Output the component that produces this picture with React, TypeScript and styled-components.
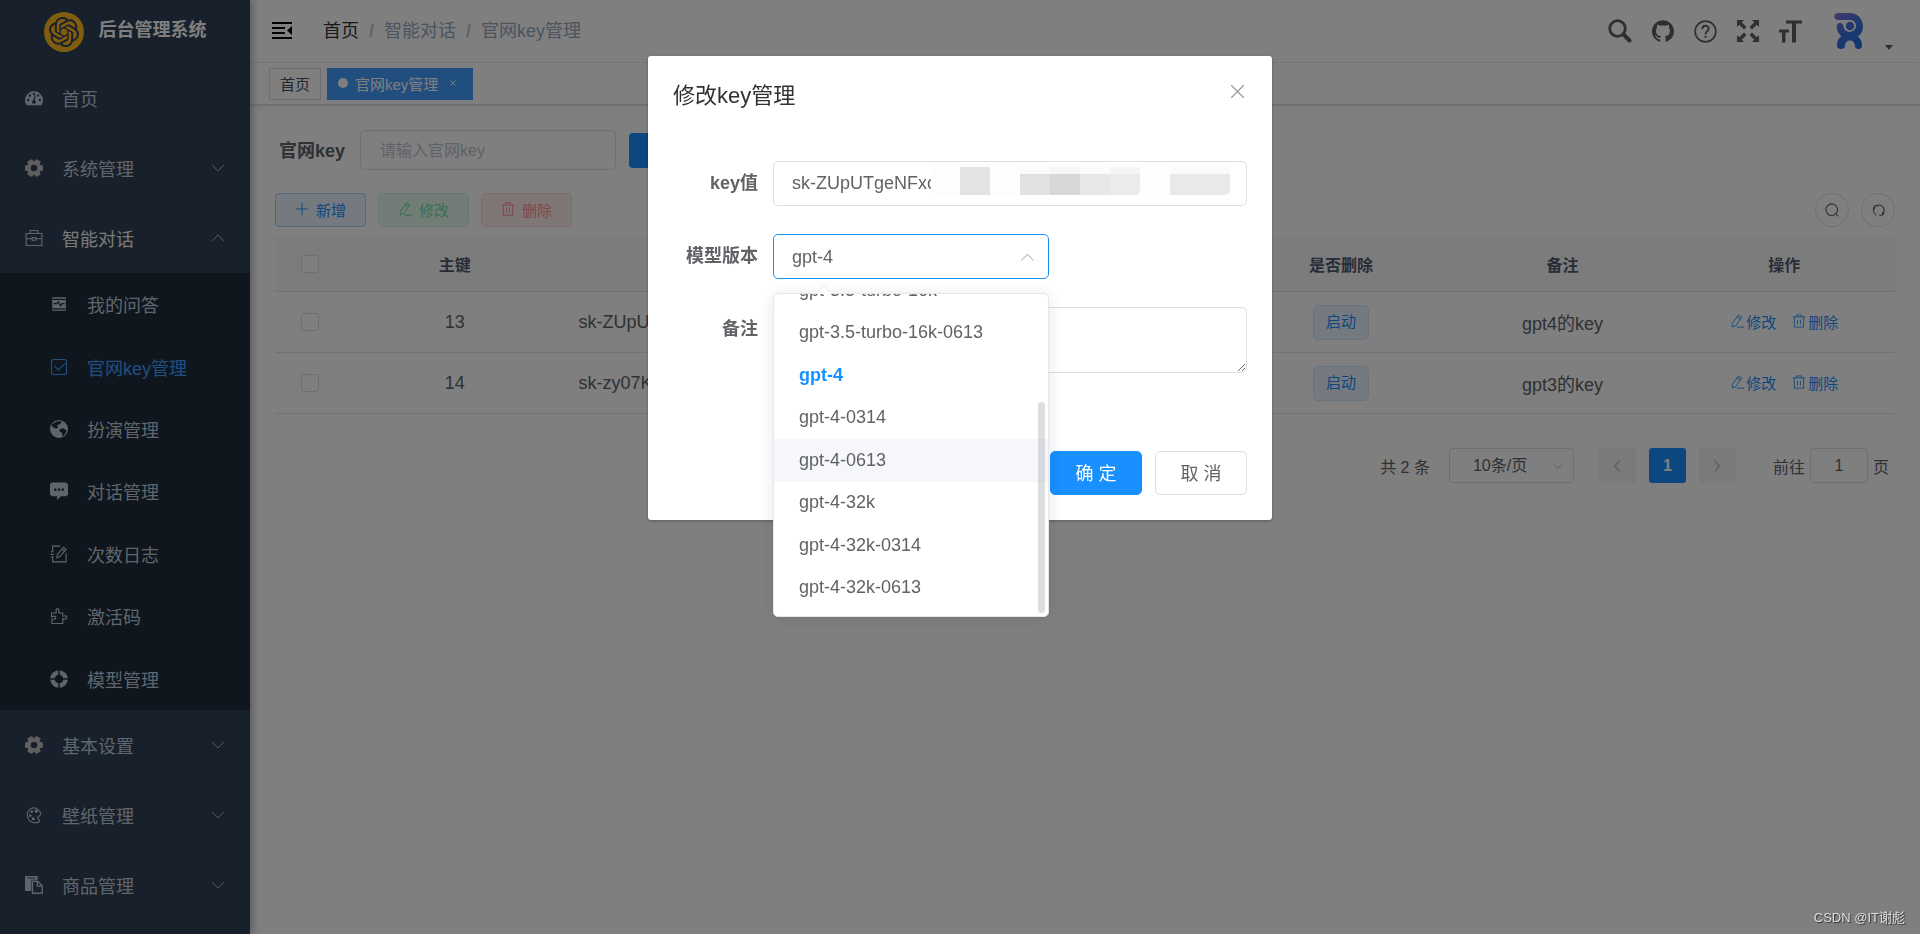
import React from 'react';
import styled, { createGlobalStyle, css } from 'styled-components';
import { SiOpenai, SiGithub } from 'react-icons/si';

const Global = createGlobalStyle`
  *, *::before, *::after { box-sizing: border-box; }
  html, body { margin: 0; background: #fff; }
  body, button, input, select, textarea {
    font-family: "Liberation Sans", "Noto Sans CJK SC", sans-serif;
    font-size: 18px;
    color: #606266;
  }
  a { text-decoration: none; color: inherit; }
  ul { list-style: none; margin: 0; padding: 0; }
  button { cursor: pointer; }
`;

/* ---------- icons ---------- */

const Svg = styled.svg<{ $size: number }>`
  width: ${p => p.$size}px;
  height: ${p => p.$size}px;
  flex: none;
  display: block;
`;

type IconProps = { size?: number };
type LineProps = IconProps & { d: string; weight?: number };

const Line = ({ d, size = 18, weight = 1.5 }: LineProps) => (
  <Svg $size={size} viewBox="0 0 24 24" fill="none" stroke="currentColor" strokeWidth={weight} aria-hidden="true">
    <path d={d} />
  </Svg>
);

const paths = {
  down: 'M2 7 L12 17 L22 7',
  up: 'M2 17 L12 7 L22 17',
  left: 'M16 3 L8 12 L16 21',
  right: 'M8 3 L16 12 L8 21',
  close: 'M2 2 L22 22 M22 2 L2 22',
  plus: 'M12 1 V23 M1 12 H23',
  edit: 'M14 2 L20 5 L10 20 L4 22 L4 16 Z M12 5.500 L18 8.500 M12 22.500 H24',
  trash: 'M1 5 H23 M4 5 V22.500 H20 V5 M8 5 V1.500 H16 V5 M9.500 10 V18 M14.500 10 V18',
  search: 'M17.500 19.500 A10 10 0 1 1 19.500 17.500 M17 17 L22.500 23',
  refresh: 'M5.500 4.500 H11 M5.500 4.500 V10 M5.500 5.500 C3 9 2.500 15.500 8.500 19.500 M9 4 C15 1.500 22 6 21 13 M18.500 19.500 H13 M18.500 19.500 V14 M18 19.500 C20 17.500 21 15 21 13',
  briefcase: 'M1.500 6 H22.500 V22 H1.500 Z M7 6 V2 H17 V6 M1.500 13 H9.500 M14.500 13 H22.500 M9.500 11.500 H14.500 V15 H9.500 Z',
  checkbox: 'M4 2 H20 L22 4 V20 L20 22 H4 L2 20 V4 Z M6 10.500 L11 16 L20 7.500',
  log: 'M3.500 8 V1.500 H14 M3.500 17 V22.500 H21.500 V11 M1 9 H5 M1 12.500 H5 M1 16 H5 M9 17 L10 12.500 L18 3 L21.500 6 L13 15.500 Z M16 5.500 L19 8.500',
  puzzle: 'M2 8 H8 C9 6 7 5 8.500 3 C10 1.500 12 2.500 12 4.500 L11.500 8 H17 V12 C19 13 20 11 22 12 C23.500 14 22 16.500 20 16 L17 15.500 V22 H2.500 V16.500 C4 15.500 6 17.500 7.500 15.500 C8.500 13 6 11.500 4.500 12.500 L2 13 Z',
};

const Dashboard = () => (
  <Svg $size={18} viewBox="0 0 24 24" fill="currentColor" aria-hidden="true">
    <path fillRule="evenodd" d="M12 3 A12 12 0 0 0 2 21.500 H22 A12 12 0 0 0 12 3 Z M12 5 a1.600 1.600 0 1 1 0 3.200 a1.600 1.600 0 0 1 0 -3.200 Z M6.500 7 a1.600 1.600 0 1 1 0 3.200 a1.600 1.600 0 0 1 0 -3.200 Z M17.500 7 a1.600 1.600 0 1 1 0 3.200 a1.600 1.600 0 0 1 0 -3.200 Z M4.200 13 a1.600 1.600 0 1 1 0 3.200 a1.600 1.600 0 0 1 0 -3.200 Z M19.800 13 a1.600 1.600 0 1 1 0 3.200 a1.600 1.600 0 0 1 0 -3.200 Z M14 8.500 L13.300 15.200 A2.500 2.500 0 1 1 11 15 L12.800 8.300 Z" />
  </Svg>
);

const Gear = () => (
  <Svg $size={18} viewBox="0 0 24 24" aria-hidden="true">
    <g fill="#bebebe">
      {[0, 60, 120].map(a => (
        <rect key={a} x="8" y="0" width="8" height="24" rx="2" transform={`rotate(${a + 30} 12 12)`} />
      ))}
      <circle cx="12" cy="12" r="9" />
    </g>
    <circle cx="12" cy="12" r="4.400" fill="#304156" />
  </Svg>
);

const Monitor = () => (
  <Svg $size={18} viewBox="0 0 24 24" aria-hidden="true">
    <path d="M3 3 H21 V21 H3 Z" fill="currentColor" />
    <path d="M3.500 5.800 H20.500 M3.500 18.500 H20.500 M5 11.500 H9 L11 9 L14 14.500 L16 11.500 H19.500" fill="none" stroke="#1f2d3d" strokeWidth="1.400" />
  </Svg>
);

const Globe = () => (
  <Svg $size={18} viewBox="0 0 24 24" aria-hidden="true">
    <circle cx="12" cy="12" r="12" fill="currentColor" />
    <path d="M9 2 L16 1.500 L14 5 L9.500 7 L11 10 L8 11.500 L3 9 L2 6 Z M13 12 L18 11 L22 14 L20 19 L16.500 22 L16 17 L12.500 15 Z" fill="#1f2d3d" />
  </Svg>
);

const Chat = () => (
  <Svg $size={18} viewBox="0 0 24 24" aria-hidden="true">
    <path d="M2.500 0.500 H21.500 L24 3 V16.500 L21.500 19 H14.500 L9.500 24 V19 H2.500 L0 16.500 V3 Z" fill="currentColor" />
    <path d="M5.500 8.500 h3 v3 h-3 Z M10.500 8.500 h3 v3 h-3 Z M15.500 8.500 h3 v3 h-3 Z" fill="#1f2d3d" />
  </Svg>
);

const Ring = () => (
  <Svg $size={18} viewBox="0 0 24 24" aria-hidden="true">
    <circle cx="12" cy="12" r="8.800" fill="none" stroke="currentColor" strokeWidth="6" />
    <path d="M12 0 V6.500 M12 17.500 V24 M0 12 H6.500 M17.500 12 H24" stroke="#1f2d3d" strokeWidth="2" />
  </Svg>
);

const Palette = () => (
  <Svg $size={18} viewBox="0 0 24 24" fill="none" stroke="currentColor" strokeWidth="1.500" aria-hidden="true">
    <path d="M20.500 8.500 C18 3 11 0.500 6.500 4.500 C2 8.500 2 15.500 6 19.500 C9 22.500 14 22.800 18.500 21.500 C21 19.500 17 18 17 15.500 C17.500 12.500 22.500 14 20.500 8.500 Z" />
    <g fill="currentColor" stroke="none">
      <circle cx="9" cy="7.500" r="1.800" /><circle cx="15" cy="7" r="2.200" /><circle cx="7" cy="13" r="1.800" /><circle cx="11" cy="17" r="2" />
    </g>
  </Svg>
);

const Pages = () => (
  <Svg $size={18} viewBox="0 0 24 24" aria-hidden="true">
    <path d="M0 0 H17 V5 H8.500 V20 H0 Z" fill="currentColor" />
    <path d="M3.500 2.600 H13.500" stroke="#304156" strokeWidth="1.200" />
    <path d="M10 7 H17 L23 13 V23 H10 Z M16.500 7 V13.500 H23" fill="none" stroke="currentColor" strokeWidth="1.800" />
  </Svg>
);

const Hamburger = () => (
  <Svg $size={21} viewBox="0 0 21 21" fill="#000" aria-hidden="true">
    <path d="M0 1 H20 V3 H0 Z M0 6 H13 V8 H0 Z M0 11 H13 V13 H0 Z M0 16 H20 V18 H0 Z M20 5 V14 L15 9.500 Z" />
  </Svg>
);

const HeaderSearch = () => (
  <Svg $size={24} viewBox="0 0 24 24" fill="none" stroke="currentColor" aria-hidden="true">
    <circle cx="9.500" cy="9.500" r="7.800" strokeWidth="2.800" />
    <path d="M15.500 15.500 L21.500 21.500" strokeWidth="4" strokeLinecap="round" />
  </Svg>
);

const Question = () => (
  <Svg $size={23} viewBox="0 0 24 24" fill="none" stroke="currentColor" strokeWidth="1.700" aria-hidden="true">
    <circle cx="12" cy="12" r="10.800" />
    <path d="M8.700 9.500 C8.700 4.800 15.300 5 15.300 9.200 C15.300 12 12 11.500 12 14.800 M12 16.500 V18.500" strokeWidth="2" />
  </Svg>
);

const Expand = () => (
  <Svg $size={22} viewBox="0 0 22 22" fill="currentColor" aria-hidden="true">
    {[0, 90, 180, 270].map(a => (
      <path key={a} transform={`rotate(${a} 11 11)`} d="M0 0 H7 L4.800 2.200 L9.500 7 L7 9.500 L2.200 4.800 L0 7 Z" />
    ))}
  </Svg>
);

const FontSize = () => (
  <Svg $size={23} viewBox="0 0 23 23" fill="currentColor" aria-hidden="true">
    <path d="M7 0.500 H23 V3.500 H17 V22.500 H13 V3.500 H7 Z M0 9.500 H10 V12.500 H6.500 V22.500 H3 V12.500 H0 Z" />
  </Svg>
);

const Avatar = () => (
  <Svg $size={38} viewBox="0 0 38 38" aria-hidden="true">
    <defs>
      <linearGradient id="brand" x1="0" y1="0" x2="0.600" y2="1">
        <stop offset="0" stopColor="#8a78d8" />
        <stop offset="0.450" stopColor="#4a72e0" />
        <stop offset="1" stopColor="#1f6fe0" />
      </linearGradient>
    </defs>
    <path fill="url(#brand)" d="M8 1 H19 C28 1 33 7 33 15 C33 19 31 22 28 24.500 C31 27 32 30 32 34 C32 38 25 38 25 34 C25 26.500 15 26.500 15 34 C15 38 7 38 7 34 C7 29 8 26.500 11.500 24.500 C8 21 6 17 7 13 C8 10 12 10 13 13 L14 16 C16 22 26 20 26 14 C26 10 23.500 8 20 8 H8 C3 8 3 1 8 1 Z" />
    <circle cx="20" cy="14" r="5" fill="#4a72e0" stroke="#fff" strokeWidth="1.500" />
  </Svg>
);

/* ---------- shell ---------- */

const Shell = styled.div`
  display: flex;
  min-height: 100vh;
`;

const Sidebar = styled.nav`
  width: 250px;
  flex: none;
  background: #304156;
  color: #bfcbd9;
  box-shadow: 2px 0 8px rgba(0, 21, 41, 0.35);
  z-index: 1;
`;

const Brand = styled.a`
  height: 63px;
  display: flex;
  align-items: center;
  justify-content: center;
  gap: 15px;
  color: #fff;
  font-weight: 700;
  line-height: 24px;
  white-space: nowrap;
`;

const BrandText = styled.span`
  padding-bottom: 4px;
`;

const BrandMark = styled.span`
  width: 40px;
  height: 40px;
  border-radius: 50%;
  background: #ffb91d;
  color: #304156;
  display: grid;
  place-items: center;
`;

const MenuLink = styled.a<{ $open?: boolean }>`
  height: 70px;
  padding: 0 25px;
  display: flex;
  align-items: center;
  gap: 19px;
  color: ${p => (p.$open ? '#f4f4f5' : '#bfcbd9')};
  > svg { color: #bfcbd9; }
`;

const MenuText = styled.span`
  flex: 1;
`;

const SubMenu = styled.ul`
  height: 437px;
  display: flex;
  flex-direction: column;
  background: #1f2d3d;
  li { flex: 1; display: flex; }
`;

const SubLink = styled.a<{ $active?: boolean }>`
  flex: 1;
  padding-left: 50px;
  display: flex;
  align-items: center;
  gap: 19px;
  color: ${p => (p.$active ? '#409eff' : '#bfcbd9')};
`;

const Column = styled.div`
  flex: 1;
  min-width: 0;
`;

const TopBar = styled.header`
  height: 63px;
  padding: 0 25px 0 22px;
  display: flex;
  align-items: center;
  border-bottom: 1px solid #f0f1f4;
`;

const Bare = styled.button`
  border: 0;
  background: none;
  padding: 0;
  display: flex;
  align-items: center;
  color: inherit;
`;

const Crumbs = styled.ol`
  flex: 1;
  list-style: none;
  margin: 0 0 0 30px;
  padding: 0 0 4px;
  display: flex;
  color: #97a8be;
  li:first-child a { color: #303133; }
  li + li::before {
    content: '/';
    margin: 0 10px;
    color: #c0c4cc;
    font-weight: 700;
  }
`;

const Tools = styled.div`
  display: flex;
  align-items: center;
  gap: 20px;
  color: #5a5e66;
`;

const User = styled(Bare)`
  margin: 0 2px 0 8px;
  gap: 17px;
  align-items: flex-end;
`;

const Caret = styled.span`
  border: 4px solid transparent;
  border-top: 5px solid #5a5e66;
  border-bottom: 0;
`;

const Tabs = styled.div`
  height: 42px;
  padding: 5px 19px;
  display: flex;
  align-items: flex-start;
  gap: 6px;
  border-bottom: 1px solid #d8dce5;
  box-shadow: 0 1px 3px rgba(0, 0, 0, 0.12);
`;

const Tab = styled.a<{ $active?: boolean }>`
  height: 32px;
  padding: 0 10px 2px;
  display: flex;
  align-items: center;
  font-size: 15px;
  border: 1px solid #d8dce5;
  color: #495060;
  ${p => p.$active && css`
    background: #409eff;
    border-color: #409eff;
    color: #fff;
    padding-right: 16px;
    &::before {
      content: '';
      width: 10px;
      height: 10px;
      margin-right: 7px;
      border-radius: 50%;
      background: #fff;
    }
  `}
`;

const TabClose = styled(Bare)`
  margin-left: 12px;
`;

/* ---------- content ---------- */

const Content = styled.main`
  padding: 25px;
`;

const SearchForm = styled.form`
  display: flex;
  align-items: center;
  margin-bottom: 23px;
`;

const SearchLabel = styled.label`
  width: 85px;
  padding: 0 15px 2px 0;
  display: flex;
  justify-content: flex-end;
  font-weight: 700;
  white-space: nowrap;
`;

const SearchInput = styled.input`
  width: 256px;
  height: 40px;
  margin-right: 13px;
  padding: 2px 19px 0;
  font-size: 16px;
  border: 1px solid #dcdfe6;
  border-radius: 5px;
  background: #fff;
  &::placeholder { color: #c0c4cc; }
`;

const Solid = styled.button`
  width: 91px;
  height: 35px;
  padding: 0 30px;
  border: 0;
  border-radius: 4px;
  background: #1890ff;
  color: #fff;
`;

const ActionRow = styled.div`
  display: flex;
  gap: 12px;
  margin-bottom: 10px;
`;

const tones = {
  primary: ['#e8f4ff', '#a3d3ff', '#1890ff'],
  success: ['#e7faf0', '#d0f5e0', '#71e2a3'],
  danger: ['#ffeded', '#ffdbdb', '#ff9292'],
};

const PlainButton = styled.button<{ $tone: keyof typeof tones }>`
  width: 91px;
  height: 34px;
  padding: 0 0 2px;
  display: flex;
  align-items: center;
  justify-content: center;
  gap: 7px;
  font-size: 15px;
  border-radius: 4px;
  background: ${p => tones[p.$tone][0]};
  border: 1px solid ${p => tones[p.$tone][1]};
  color: ${p => tones[p.$tone][2]};
`;

const Spacer = styled.div`
  flex: 1;
`;

const RoundButton = styled.button`
  width: 34px;
  height: 34px;
  padding: 0;
  display: grid;
  place-items: center;
  border: 1px solid #dcdfe6;
  border-radius: 50%;
  background: #fff;
`;

const Table = styled.table`
  width: 100%;
  table-layout: fixed;
  border-collapse: separate;
  border-spacing: 0;
  text-align: center;
  th, td {
    padding: 0 13px;
    border-bottom: 1px solid #dfe6ec;
    white-space: nowrap;
  }
  th {
    height: 55px;
    background: #f8f8f9;
    color: #515a6e;
    font-size: 16px;
    font-weight: 700;
  }
  td { height: 61px; overflow: hidden; text-overflow: ellipsis; }
  th:first-child { width: 69px; }
`;

const KeyText = styled.span`
  display: block;
  text-align: left;
`;

const Check = styled.input`
  appearance: none;
  display: block;
  width: 18px;
  height: 18px;
  margin: 0 auto;
  border: 1px solid #dcdfe6;
  border-radius: 3px;
  background: #fff;
`;

const StatusTag = styled.span`
  display: inline-block;
  height: 35px;
  padding: 0 12px;
  line-height: 31px;
  font-size: 15px;
  border: 1px solid #d1e9ff;
  border-radius: 5px;
  background: #e8f4ff;
  color: #1890ff;
  vertical-align: middle;
`;

const RowActions = styled.div`
  display: flex;
  justify-content: center;
  gap: 16px;
  padding-bottom: 2px;
`;

const RowAction = styled(Bare)`
  gap: 2px;
  font-size: 15px;
  color: #1890ff;
`;

const Pagination = styled.div`
  display: flex;
  align-items: center;
  justify-content: flex-end;
  margin: 34px 6px 0 0;
  font-size: 16px;
`;

const SizeBox = styled.div`
  position: relative;
  margin: 0 25px 0 19px;
  > svg { position: absolute; right: 10px; top: 12px; color: #c0c4cc; }
`;

const SizeSelect = styled.select`
  appearance: none;
  display: block;
  width: 125px;
  height: 35px;
  padding: 0 23px;
  font-size: 16px;
  border: 1px solid #dcdfe6;
  border-radius: 4px;
  background: #fff;
`;

const PageButton = styled.button<{ $current?: boolean }>`
  width: 37px;
  height: 35px;
  margin-right: 13px;
  padding: 0;
  display: grid;
  place-items: center;
  border: 0;
  border-radius: 3px;
  font-size: 16px;
  font-weight: 700;
  background: ${p => (p.$current ? '#1890ff' : '#f4f4f5')};
  color: ${p => (p.$current ? '#fff' : '#c0c4cc')};
`;

const Jump = styled.label`
  display: flex;
  align-items: center;
  gap: 5px;
  margin-left: 24px;
`;

const JumpInput = styled.input`
  width: 58px;
  height: 35px;
  text-align: center;
  font-size: 16px;
  border: 1px solid #dcdfe6;
  border-radius: 4px;
`;

/* ---------- dialog ---------- */

const Backdrop = styled.div`
  position: fixed;
  inset: 0;
  z-index: 10;
  background: rgba(0, 0, 0, 0.5);
  display: flex;
  justify-content: center;
  align-items: flex-start;
  padding-top: 56px;
`;

const Dialog = styled.section`
  width: 624px;
  padding: 22px 25px 25px;
  background: #fff;
  border-radius: 3px;
  box-shadow: 0 1px 3px rgba(0, 0, 0, 0.3);
`;

const DialogHead = styled.header`
  display: flex;
  justify-content: space-between;
  align-items: center;
  height: 30px;
  margin-bottom: 53px;
  color: #909399;
  button { margin: 0 2px 4px 0; }
`;

const DialogTitle = styled.h2`
  margin: 0;
  font-size: 22px;
  font-weight: 400;
  color: #303133;
`;

const Field = styled.div`
  display: flex;
  align-items: flex-start;
  margin-bottom: 28px;
`;

const FieldLabel = styled.label`
  width: 100px;
  padding-right: 15px;
  line-height: 45px;
  text-align: right;
  font-weight: 700;
`;

const InputWrap = styled.div`
  position: relative;
  flex: 1;
`;

const TextInput = styled.input`
  display: block;
  width: 100%;
  height: 45px;
  padding: 0 18px;
  border: 1px solid #dcdfe6;
  border-radius: 5px;
`;

const Mosaic = styled.div`
  position: absolute;
  left: 158px;
  top: 6px;
  display: flex;
`;

const Tile = styled.span<{ $w: number; $tone: string; $cap?: string; $round?: boolean }>`
  width: ${p => p.$w}px;
  height: 28px;
  border-top: 7px solid ${p => p.$cap || '#fbfbfb'};
  background: ${p => p.$tone};
  border-radius: ${p => (p.$round ? '0 0 5px 0' : '0')};
`;

const SelectWrap = styled.div`
  position: relative;
  width: 276px;
  > svg { position: absolute; right: 14px; top: 16px; color: #c0c4cc; }
`;

const ModelSelect = styled.select`
  appearance: none;
  display: block;
  width: 100%;
  height: 45px;
  padding: 0 18px;
  border: 1px solid #1890ff;
  border-radius: 5px;
  background: #fff;
`;

const Popper = styled.div`
  position: absolute;
  top: 59px;
  left: 0;
  width: 100%;
  z-index: 2;
  border: 1px solid #e4e7ed;
  border-radius: 5px;
  background: #fff;
  box-shadow: 0 2px 15px rgba(0, 0, 0, 0.1);
  &::before {
    content: '';
    position: absolute;
    left: 44px;
    top: -6px;
    width: 12px;
    height: 12px;
    transform: rotate(45deg);
    background: #fff;
    border: 1px solid #ebeef5;
    border-width: 1px 0 0 1px;
  }
`;

const Scroller = styled.div`
  position: relative;
  height: 322px;
  padding-bottom: 7px;
  overflow: hidden;
  display: flex;
  flex-direction: column;
  justify-content: flex-end;
`;

const Options = styled.ul`
  flex: none;
  height: 340px;
  display: grid;
  grid-template-rows: repeat(8, 1fr);
`;

const Option = styled.li<{ $selected?: boolean; $hover?: boolean }>`
  padding: 0 25px;
  display: flex;
  align-items: center;
  background: ${p => (p.$hover ? '#f5f7fa' : 'transparent')};
  color: ${p => (p.$selected ? '#1890ff' : '#606266')};
  font-weight: ${p => (p.$selected ? 700 : 400)};
`;

const Thumb = styled.span`
  position: absolute;
  right: 3px;
  bottom: 3px;
  width: 7px;
  height: 211px;
  border-radius: 4px;
  background: rgba(144, 147, 153, 0.3);
`;

const Remark = styled.textarea`
  display: block;
  flex: 1;
  height: 66px;
  padding: 6px 18px;
  border: 1px solid #dcdfe6;
  border-radius: 5px;
  resize: vertical;
`;

const DialogFoot = styled.footer`
  display: flex;
  justify-content: flex-end;
  gap: 13px;
  margin-top: 78px;
`;

const FootButton = styled.button<{ $primary?: boolean }>`
  width: 92px;
  height: 44px;
  padding: 0 0 3px;
  border-radius: 5px;
  border: 1px solid ${p => (p.$primary ? '#1890ff' : '#dcdfe6')};
  background: ${p => (p.$primary ? '#1890ff' : '#fff')};
  color: ${p => (p.$primary ? '#fff' : '#606266')};
`;

const Watermark = styled.div`
  position: fixed;
  right: 15px;
  bottom: 8px;
  z-index: 20;
  font-size: 13px;
  color: #ddd;
  text-shadow: 1px 1px 1px #333;
`;

/* ---------- data ---------- */

const subItems = [
  { text: '我的问答', icon: <Monitor /> },
  { text: '官网key管理', icon: <Line d={paths.checkbox} />, active: true },
  { text: '扮演管理', icon: <Globe /> },
  { text: '对话管理', icon: <Chat /> },
  { text: '次数日志', icon: <Line d={paths.log} /> },
  { text: '激活码', icon: <Line d={paths.puzzle} /> },
  { text: '模型管理', icon: <Ring /> },
];

const rows = [
  { id: 13, value: 'sk-ZUpUTgeNFxc', remark: 'gpt4的key' },
  { id: 14, value: 'sk-zy07K', remark: 'gpt3的key' },
];

const models = [
  'gpt-3.5-turbo-16k',
  'gpt-3.5-turbo-16k-0613',
  'gpt-4',
  'gpt-4-0314',
  'gpt-4-0613',
  'gpt-4-32k',
  'gpt-4-32k-0314',
  'gpt-4-32k-0613',
];

type MenuItemProps = { icon: React.ReactNode; text: string; arrow?: 'up' | 'down' };

const MenuItem = ({ icon, text, arrow }: MenuItemProps) => (
  <MenuLink href="#" $open={arrow === 'up'}>
    {icon}
    <MenuText>{text}</MenuText>
    {arrow && <Line d={paths[arrow]} size={14} />}
  </MenuLink>
);

const KeyDialog = () => (
  <Backdrop>
    <Dialog role="dialog" aria-labelledby="dialog-title">
      <DialogHead>
        <DialogTitle id="dialog-title">修改key管理</DialogTitle>
        <Bare aria-label="关闭"><Line d={paths.close} size={15} weight={1.8} /></Bare>
      </DialogHead>
      <Field>
        <FieldLabel htmlFor="key">key值</FieldLabel>
        <InputWrap>
          <TextInput id="key" defaultValue="sk-ZUpUTgeNFxc" />
          <Mosaic>
            <Tile $w={29} $tone="#fdfdfd" $cap="#fdfdfd" />
            <Tile $w={30} $tone="#e3e3e3" $cap="#e3e3e3" />
            <Tile $w={30} $tone="#fdfdfd" $cap="#fdfdfd" />
            <Tile $w={30} $tone="#e1e1e1" />
            <Tile $w={30} $tone="#d7d7d7" $cap="#f6f6f6" />
            <Tile $w={30} $tone="#e7e7e7" />
            <Tile $w={30} $tone="#ebebeb" $cap="#f5f5f5" $round />
            <Tile $w={30} $tone="#fefefe" $cap="#fefefe" />
            <Tile $w={60} $tone="#e8eaea" $round />
          </Mosaic>
        </InputWrap>
      </Field>
      <Field>
        <FieldLabel htmlFor="model">模型版本</FieldLabel>
        <SelectWrap>
          <ModelSelect id="model" defaultValue="gpt-4">
            {models.map(m => <option key={m}>{m}</option>)}
          </ModelSelect>
          <Line d={paths.up} size={15} weight={2} />
          <Popper>
            <Scroller>
              <Options role="listbox">
                {models.map(m => (
                  <Option key={m} role="option" $selected={m === 'gpt-4'} $hover={m === 'gpt-4-0613'}>{m}</Option>
                ))}
              </Options>
              <Thumb />
            </Scroller>
          </Popper>
        </SelectWrap>
      </Field>
      <Field>
        <FieldLabel htmlFor="remark">备注</FieldLabel>
        <Remark id="remark" />
      </Field>
      <DialogFoot>
        <FootButton $primary>确 定</FootButton>
        <FootButton>取 消</FootButton>
      </DialogFoot>
    </Dialog>
  </Backdrop>
);

export default function App() {
  return (
    <>
      <Global />
      <Shell>
        <Sidebar>
          <Brand href="#">
            <BrandMark><SiOpenai size={30} /></BrandMark>
            <BrandText>后台管理系统</BrandText>
          </Brand>
          <MenuItem icon={<Dashboard />} text="首页" />
          <MenuItem icon={<Gear />} text="系统管理" arrow="down" />
          <MenuItem icon={<Line d={paths.briefcase} />} text="智能对话" arrow="up" />
          <SubMenu>
            {subItems.map(s => (
              <li key={s.text}><SubLink href="#" $active={s.active}>{s.icon}{s.text}</SubLink></li>
            ))}
          </SubMenu>
          <MenuItem icon={<Gear />} text="基本设置" arrow="down" />
          <MenuItem icon={<Palette />} text="壁纸管理" arrow="down" />
          <MenuItem icon={<Pages />} text="商品管理" arrow="down" />
        </Sidebar>
        <Column>
          <TopBar>
            <Bare aria-label="折叠菜单"><Hamburger /></Bare>
            <Crumbs>
              <li><a href="#">首页</a></li>
              <li>智能对话</li>
              <li>官网key管理</li>
            </Crumbs>
            <Tools>
              <Bare aria-label="搜索"><HeaderSearch /></Bare>
              <Bare aria-label="源码"><SiGithub size={22} /></Bare>
              <Bare aria-label="文档"><Question /></Bare>
              <Bare aria-label="全屏"><Expand /></Bare>
              <Bare aria-label="字号"><FontSize /></Bare>
              <User aria-label="用户"><Avatar /><Caret /></User>
            </Tools>
          </TopBar>
          <Tabs>
            <Tab href="#">首页</Tab>
            <Tab as="div" $active>
              官网key管理
              <TabClose aria-label="关闭标签"><Line d={paths.close} size={6} weight={4} /></TabClose>
            </Tab>
          </Tabs>
          <Content>
            <SearchForm>
              <SearchLabel htmlFor="query">官网key</SearchLabel>
              <SearchInput id="query" placeholder="请输入官网key" />
              <Solid type="button" aria-label="查询"><Line d={paths.search} size={15} /></Solid>
            </SearchForm>
            <ActionRow>
              <PlainButton $tone="primary"><Line d={paths.plus} size={14} />新增</PlainButton>
              <PlainButton $tone="success" disabled><Line d={paths.edit} size={14} weight={1.8} />修改</PlainButton>
              <PlainButton $tone="danger" disabled><Line d={paths.trash} size={14} weight={1.8} />删除</PlainButton>
              <Spacer />
              <RoundButton aria-label="显示搜索"><Line d={paths.search} size={14} weight={1.8} /></RoundButton>
              <RoundButton aria-label="刷新"><Line d={paths.refresh} size={15} weight={1.8} /></RoundButton>
            </ActionRow>
            <Table>
              <thead>
                <tr>
                  <th><Check type="checkbox" aria-label="全选" /></th>
                  <th>主键</th>
                  <th />
                  <th />
                  <th />
                  <th>是否删除</th>
                  <th>备注</th>
                  <th>操作</th>
                </tr>
              </thead>
              <tbody>
                {rows.map(r => (
                  <tr key={r.id}>
                    <td><Check type="checkbox" aria-label={`选择 ${r.id}`} /></td>
                    <td>{r.id}</td>
                    <td><KeyText>{r.value}</KeyText></td>
                    <td />
                    <td />
                    <td><StatusTag>启动</StatusTag></td>
                    <td>{r.remark}</td>
                    <td>
                      <RowActions>
                        <RowAction><Line d={paths.edit} size={14} />修改</RowAction>
                        <RowAction><Line d={paths.trash} size={14} />删除</RowAction>
                      </RowActions>
                    </td>
                  </tr>
                ))}
              </tbody>
            </Table>
            <Pagination>
              共 2 条
              <SizeBox>
                <SizeSelect aria-label="每页条数"><option>10条/页</option></SizeSelect>
                <Line d={paths.down} size={12} weight={2} />
              </SizeBox>
              <PageButton aria-label="上一页"><Line d={paths.left} size={14} weight={3} /></PageButton>
              <PageButton $current>1</PageButton>
              <PageButton aria-label="下一页"><Line d={paths.right} size={14} weight={3} /></PageButton>
              <Jump>前往<JumpInput defaultValue="1" />页</Jump>
            </Pagination>
          </Content>
        </Column>
      </Shell>
      <KeyDialog />
      <Watermark>CSDN @IT谢彪</Watermark>
    </>
  );
}
